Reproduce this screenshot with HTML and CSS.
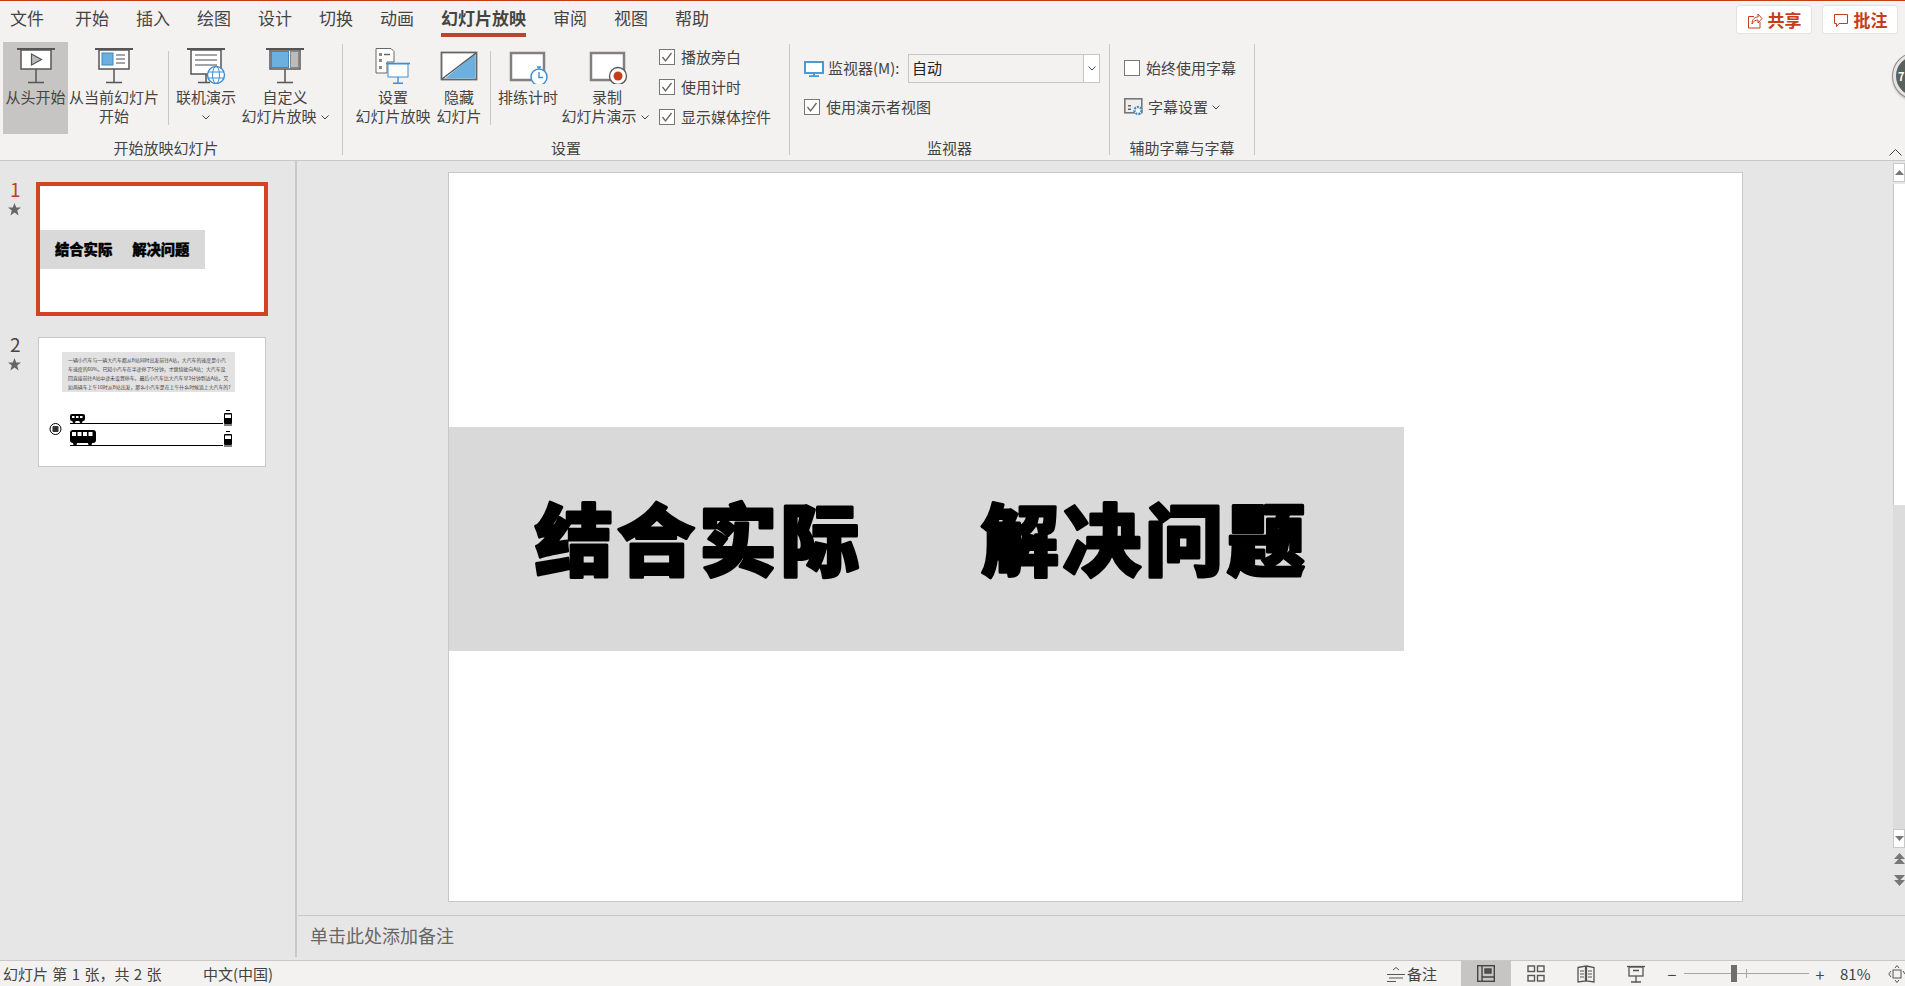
FILE: index.html
```html
<!DOCTYPE html>
<html lang="zh-CN">
<head>
<meta charset="utf-8">
<title>PowerPoint</title>
<link rel="stylesheet" href="styles.css">
</head>
<body>
<div class="app">
  <div class="topline"></div>
  <div class="tabs">
    <span class="tab first">文件</span><span class="tab">开始</span><span class="tab">插入</span><span class="tab">绘图</span><span class="tab">设计</span><span class="tab">切换</span><span class="tab">动画</span><span class="tab active">幻灯片放映</span><span class="tab">审阅</span><span class="tab">视图</span><span class="tab">帮助</span>
    <div class="top-actions">
      <button class="act"><svg width="16" height="18" viewBox="0 0 16 18" fill="none" stroke="#c43e1c" stroke-width="1"><path d="M7 5.5H1.5V17H13V11"/><path d="M5 13C5 8 8 6 11 6V3l4 4.5L11 12V9C8.5 9 6.5 10 5 13Z"/></svg>共享</button>
      <button class="act"><svg width="16" height="18" viewBox="0 0 16 18" fill="none" stroke="#c43e1c" stroke-width="1"><path d="M1.5 3.5H14.5V12.5H6L3.5 15.5V12.5H1.5Z"/></svg>批注</button>
    </div>
  </div>
  <div class="ribbon">
    <section class="group g1">
      <div class="gbody">
        <div class="cmd w-first selected">
          <svg class="ico" width="40" height="36" viewBox="0 0 40 36"><path d="M1 1H39" stroke="#555" stroke-width="2"/><rect x="5" y="2" width="30" height="19" fill="#fff" stroke="#555" stroke-width="1.5"/><path d="M20 21V34M12 34.5H28" stroke="#555" stroke-width="1.5" fill="none"/><path d="M15.5 6L25.5 11.500 15.5 17Z" fill="#bbb" stroke="#555" stroke-width="1.2"/></svg>
          <span class="ln">从头开始</span>
        </div>
        <div class="cmd w-cur">
          <svg class="ico" width="40" height="36" viewBox="0 0 40 36"><path d="M1 1H39" stroke="#555" stroke-width="2"/><rect x="5" y="2" width="30" height="19" fill="#fff" stroke="#555" stroke-width="1.5"/><path d="M20 21V34M12 34.5H28" stroke="#555" stroke-width="1.5" fill="none"/><rect x="8" y="5" width="11" height="12" fill="#6cb0e0" stroke="#3f87bd"/><path d="M22 7H31M22 11H31M22 15H31" stroke="#888" stroke-width="1.5"/></svg>
          <span class="ln">从当前幻灯片</span><span class="ln">开始</span>
        </div>
        <div class="vsep s1"></div>
        <div class="cmd w-online">
          <svg class="ico" width="40" height="36" viewBox="0 0 40 36"><path d="M1 1H39" stroke="#555" stroke-width="2"/><rect x="5" y="2" width="30" height="24" fill="#fff" stroke="#555" stroke-width="1.5"/><path d="M20 26V34M12 34.5H24" stroke="#555" stroke-width="1.5" fill="none"/><path d="M9 7H31M9 12H31M9 17H31" stroke="#888" stroke-width="1.5"/><circle cx="30" cy="27" r="8.5" fill="#fff" stroke="#3f8fd0" stroke-width="1.4"/><ellipse cx="30" cy="27" rx="3.5" ry="8.5" fill="none" stroke="#3f8fd0"/><path d="M22 24H38M22 30H38" stroke="#3f8fd0"/></svg>
          <span class="ln">联机演示</span><span class="ln"><svg class="chev" width="8" height="5" viewBox="0 0 8 5"><path d="M.5.5L4 4 7.5.5" fill="none" stroke="#444"/></svg></span>
        </div>
        <div class="cmd w-custom">
          <svg class="ico" width="40" height="36" viewBox="0 0 40 36"><path d="M1 1H39" stroke="#555" stroke-width="2"/><rect x="5" y="2" width="30" height="19" fill="#fff" stroke="#555" stroke-width="1.5"/><path d="M20 21V34M12 34.5H28" stroke="#555" stroke-width="1.5" fill="none"/><rect x="6.500" y="3.500" width="17" height="16" fill="#6cb0e0" stroke="#3f87bd"/><rect x="25.500" y="3.500" width="8" height="16" fill="#bbb" stroke="#888"/></svg>
          <span class="ln">自定义</span><span class="ln">幻灯片放映<svg class="chev after" width="8" height="5" viewBox="0 0 8 5"><path d="M.5.5L4 4 7.5.5" fill="none" stroke="#444"/></svg></span>
        </div>
      </div>
      <div class="glabel shift">开始放映幻灯片</div>
    </section>
    <section class="group g2">
      <div class="gbody">
        <div class="cmd w-setup">
          <svg class="ico" width="40" height="36" viewBox="0 0 40 36"><path d="M3 .5H18L21 3.5V14H14V25H3Z" fill="#fff" stroke="#666"/><path d="M6 5h3v3H6zM6 11h3v3H6zM6 18h3v3H6z" fill="#888"/><path d="M11 6.5H17" stroke="#666" stroke-width="1.5"/><path d="M13 15.5H37" stroke="#3f8fd0" stroke-width="1.6"/><rect x="15" y="16" width="20" height="13" fill="#fff" stroke="#3f8fd0"/><path d="M25 29V35M20 35.2H30" stroke="#3f8fd0" stroke-width="1.4"/></svg>
          <span class="ln">设置</span><span class="ln">幻灯片放映</span>
        </div>
        <div class="cmd w-hide">
          <svg class="ico" width="40" height="36" viewBox="0 0 40 36"><rect x="2.500" y="4.500" width="35" height="27" fill="#fff" stroke="#666" stroke-width="1.8"/><path d="M36.500 5.500V30.500H6Z" fill="#6cb0e0"/><path d="M3 31L37 5" stroke="#555" stroke-width="1.4"/></svg>
          <span class="ln">隐藏</span><span class="ln">幻灯片</span>
        </div>
        <div class="vsep s2"></div>
        <div class="cmd w-rehearse">
          <svg class="ico" width="40" height="36" viewBox="0 0 40 36"><rect x="3" y="5" width="33" height="27" fill="#fff" stroke="#808080" stroke-width="2.500"/><circle cx="31" cy="29" r="8" fill="#fff" stroke="#3f8fd0" stroke-width="1.500"/><path d="M31 24V29.500H35M29 19H33M31 19V21" stroke="#3f8fd0" stroke-width="1.400" fill="none"/></svg>
          <span class="ln">排练计时</span>
        </div>
        <div class="cmd w-record">
          <svg class="ico shifted" width="40" height="36" viewBox="0 0 40 36"><rect x="2" y="5" width="33" height="27" fill="#fff" stroke="#808080" stroke-width="2.500"/><circle cx="29" cy="28" r="8.500" fill="#fff" stroke="#555" stroke-width="1.300"/><circle cx="29" cy="28" r="4.500" fill="#c43e1c"/></svg>
          <span class="ln pad">录制</span><span class="ln">幻灯片演示<svg class="chev after" width="8" height="5" viewBox="0 0 8 5"><path d="M.5.5L4 4 7.5.5" fill="none" stroke="#444"/></svg></span>
        </div>
        <div class="checks">
          <label class="chk"><svg class="box" width="16" height="16" viewBox="0 0 16 16"><rect x=".5" y=".5" width="15" height="15" fill="#fff" stroke="#777"/><path d="M3.5 8L6.5 12 12.5 4" fill="none" stroke="#666" stroke-width="1.3"/></svg>播放旁白</label>
          <label class="chk"><svg class="box" width="16" height="16" viewBox="0 0 16 16"><rect x=".5" y=".5" width="15" height="15" fill="#fff" stroke="#777"/><path d="M3.5 8L6.5 12 12.5 4" fill="none" stroke="#666" stroke-width="1.3"/></svg>使用计时</label>
          <label class="chk"><svg class="box" width="16" height="16" viewBox="0 0 16 16"><rect x=".5" y=".5" width="15" height="15" fill="#fff" stroke="#777"/><path d="M3.5 8L6.5 12 12.5 4" fill="none" stroke="#666" stroke-width="1.3"/></svg>显示媒体控件</label>
        </div>
      </div>
      <div class="glabel">设置</div>
    </section>
    <section class="group g3">
      <div class="gbody col">
        <div class="mon-row">
          <svg width="20" height="16" viewBox="0 0 20 16"><rect x="1" y="1" width="18" height="11" fill="#fff" stroke="#4a9ad4" stroke-width="2"/><path d="M10 12V15M5 15.2H15" stroke="#4a9ad4" stroke-width="2"/></svg>
          <span class="mon-label">监视器(M):</span>
          <div class="combo"><span class="combo-val">自动</span><span class="combo-btn"><svg width="8" height="5" viewBox="0 0 8 5"><path d="M.5.5L4 4 7.5.5" fill="none" stroke="#444"/></svg></span></div>
        </div>
        <label class="chk presenter"><svg class="box" width="16" height="16" viewBox="0 0 16 16"><rect x=".5" y=".5" width="15" height="15" fill="#fff" stroke="#777"/><path d="M3.5 8L6.5 12 12.5 4" fill="none" stroke="#666" stroke-width="1.3"/></svg>使用演示者视图</label>
      </div>
      <div class="glabel">监视器</div>
    </section>
    <section class="group g4">
      <div class="gbody col">
        <label class="chk always"><svg class="box" width="16" height="16" viewBox="0 0 16 16"><rect x=".5" y=".5" width="15" height="15" fill="#fff" stroke="#777"/></svg>始终使用字幕</label>
        <div class="subset"><svg width="20" height="18" viewBox="0 0 20 18"><rect x=".8" y=".8" width="17" height="14" fill="#eee" stroke="#777" stroke-width="1.6"/><path d="M4 7h3v1.5H4zM4 10.5h3V12H4z" fill="#666"/><circle cx="14" cy="12.5" r="3.5" fill="#fff" stroke="#3f8fd0" stroke-width="2.4" stroke-dasharray="2 1"/></svg><span>字幕设置</span><svg class="chev" width="8" height="5" viewBox="0 0 8 5"><path d="M.5.5L4 4 7.5.5" fill="none" stroke="#444"/></svg></div>
      </div>
      <div class="glabel">辅助字幕与字幕</div>
    </section>
    <svg class="collapse" width="13" height="8" viewBox="0 0 13 8"><path d="M.5 7.5L6.5 1.5 12.5 7.5" fill="none" stroke="#444"/></svg>
  </div>
  <div class="badge"><span>7</span></div>
  <main class="main">
    <aside class="pane">
      <div class="thumb-row">
        <div class="num cur">1<svg class="star" width="13" height="13" viewBox="0 0 12 12"><path d="M6 0L7.6 4.2H12L8.5 7 9.8 11.5 6 8.8 2.2 11.5 3.5 7 0 4.2H4.4Z" fill="#666"/></svg></div>
        <div class="thumb one">
          <div class="tband"><span>结合实际</span><span>解决问题</span></div>
        </div>
      </div>
      <div class="thumb-row second">
        <div class="num">2<svg class="star" width="13" height="13" viewBox="0 0 12 12"><path d="M6 0L7.6 4.2H12L8.5 7 9.8 11.5 6 8.8 2.2 11.5 3.5 7 0 4.2H4.4Z" fill="#666"/></svg></div>
        <div class="thumb two">
          <div class="problem">
            <p>一辆小汽车与一辆大汽车都从B站同时出发前往A站，大汽车的速度是小汽</p>
            <p>车速度的60%。已知小汽车在半途停了5分钟，才继续驶向A站；大汽车没</p>
            <p>回直接前往A站中途未设置停车。最后小汽车比大汽车早3分钟到达A站。又</p>
            <p>如两辆车上午10时从B站出发，那么小汽车是在上午什么时候追上大汽车的?</p>
          </div>
          <svg class="route" width="226" height="44" viewBox="0 0 226 44">
            <circle cx="16.500" cy="22" r="5.500" fill="#fff" stroke="#000"/><rect x="13.500" y="19" width="6" height="6" rx="1" fill="#333"/>
            <rect x="31" y="7" width="15" height="7" rx="2" fill="#000"/><path d="M33 9h2.500v2H33zM37 9h2.500v2H37zM41 9h2.500v2H41z" fill="#fff"/><circle cx="35" cy="14.500" r="1.500" fill="#000"/><circle cx="42" cy="14.500" r="1.500" fill="#000"/>
            <path d="M31 16.500H184M31 38.500H184" stroke="#000"/>
            <rect x="185" y="6" width="8" height="11" rx="1" fill="#000"/><rect x="186" y="7.500" width="6" height="3.500" fill="#fff"/><path d="M187 3.500H191M185 18H193" stroke="#000"/>
            <rect x="31" y="23" width="26" height="13" rx="3" fill="#000"/><path d="M33 25h4v4h-4zM38.500 25h4v4h-4zM44 25h4v4h-4zM49.500 25h4v4h-4z" fill="#fff"/><circle cx="36" cy="36.500" r="2" fill="#000"/><circle cx="51" cy="36.500" r="2" fill="#000"/>
            <rect x="185" y="27" width="8" height="11" rx="1" fill="#000"/><rect x="186" y="28.500" width="6" height="3.500" fill="#fff"/><path d="M187 24.500H191M185 39H193" stroke="#000"/>
          </svg>
        </div>
      </div>
    </aside>
    <div class="work">
      <div class="canvas">
        <div class="stage">
          <div class="slide">
            <div class="band">
              <svg class="title" width="955" height="224" viewBox="0 0 955 224"><text x="86" y="143">结合实际</text><text x="532" y="143">解决问题</text></svg>
            </div>
          </div>
        </div>
        <div class="vscroll">
          <div class="sbtn"><svg width="9" height="5" viewBox="0 0 9 5"><path d="M4.500 0L9 5H0Z" fill="#777"/></svg></div>
          <div class="sthumb"></div>
          <div class="strack"></div>
          <div class="sbtn low"><svg width="9" height="5" viewBox="0 0 9 5"><path d="M4.500 5L9 0H0Z" fill="#777"/></svg></div>
          <svg class="spage" width="11" height="12" viewBox="0 0 11 12"><path d="M5.500 0L11 6H0ZM5.500 5L11 11H0Z" fill="#777"/></svg>
          <svg class="spage" width="11" height="12" viewBox="0 0 11 12"><path d="M5.500 12L11 6H0ZM5.500 7L11 1H0Z" fill="#777"/></svg>
        </div>
      </div>
      <div class="notes">单击此处添加备注</div>
    </div>
  </main>
  <footer class="status">
    <span class="s-count">幻灯片 第 1 张，共 2 张</span>
    <span class="s-lang">中文(中国)</span>
    <div class="s-right">
      <div class="s-notes"><svg width="18" height="18" viewBox="0 0 18 18" fill="none" stroke="#555"><path d="M6 5L9 2.500 12 5M0 9.500H18M2 13H16M0 16.500H9"/></svg>备注</div>
      <div class="view on"><svg width="18" height="17" viewBox="0 0 18 17" fill="none" stroke="#444" stroke-width="1.4"><rect x=".7" y=".7" width="16.600" height="15.600"/><path d="M5 1V16M5 12H17"/><rect x="8" y="4" width="6" height="4" fill="#555"/></svg></div>
      <div class="view"><svg width="18" height="17" viewBox="0 0 18 17" fill="none" stroke="#555" stroke-width="1.400"><rect x="1" y="1" width="6.500" height="5.500"/><rect x="10.500" y="1" width="6.500" height="5.500"/><rect x="1" y="10.500" width="6.500" height="5.500"/><rect x="10.500" y="10.500" width="6.500" height="5.500"/></svg></div>
      <div class="view"><svg width="18" height="18" viewBox="0 0 18 18" fill="none" stroke="#555" stroke-width="1.300"><path d="M1 2.500L8.500 1V16L1 17ZM9.500 1L17 2.500V17L9.500 16Z"/><path d="M3 6H7M3 9H7M3 12H7M11 6H15M11 9H15M11 12H15" stroke-width="1"/></svg></div>
      <div class="view"><svg width="18" height="18" viewBox="0 0 18 18" fill="none" stroke="#555" stroke-width="1.300"><path d="M0 1.500H18"/><rect x="2" y="2" width="14" height="9"/><path d="M9 11V16.500M4 17H14M6 5.500H12"/></svg></div>
      <span class="zbtn minus">−</span>
      <div class="slider"><span class="tick"></span><span class="knob"></span></div>
      <span class="zbtn plus">+</span>
      <span class="pct">81%</span>
      <svg class="fit" width="17" height="20" viewBox="0 0 17 20" fill="none" stroke="#555"><rect x="5" y="6" width="8" height="8"/><path d="M3 7L.8 10 3 13M7 4L9 1.500 11 4M7 16L9 18.500 11 16M15 7L17 10"/></svg>
    </div>
  </footer>
</div>
</body>
</html>
```
FILE: styles.css
```css
* { box-sizing: border-box; }
html, body { margin: 0; padding: 0; }
body {
  width: 1905px;
  height: 986px;
  overflow: hidden;
  font-family: "Noto Sans CJK SC", "Noto Sans", sans-serif;
  color: #444;
  background: #e6e6e6;
}
.app { position: relative; width: 1905px; height: 986px; display: flex; flex-direction: column; overflow: hidden; }
.topline { height: 1px; background: #c43e1c; flex: none; }

.tabs { height: 36px; flex: none; display: flex; align-items: flex-start; background: #f3f2f1; padding-left: 10px; gap: 27px; }
.tab { height: 36px; line-height: 34px; font-size: 17px; white-space: nowrap; color: #444; }
.tab.first { margin-right: 4px; }
.tab.active { font-weight: 700; box-shadow: inset 0 -4px 0 #b7472a; }
.top-actions { margin-left: auto; display: flex; gap: 10px; padding: 4px 7px 0 0; }
.act {
  width: 76px; height: 29px; padding: 0; display: flex; align-items: center; justify-content: center; gap: 5px;
  background: #fff; border: 1px solid #e4e2e0; border-radius: 3px;
  font: 700 17px "Noto Sans CJK SC", sans-serif; color: #c43e1c;
}

.ribbon { position: relative; height: 124px; flex: none; display: flex; padding-top: 7px; background: #f3f2f1; border-bottom: 1px solid #c8c8c8; }
.group { height: 111px; flex: none; border-right: 1px solid #c8c8c8; display: flex; flex-direction: column; }
.g1 { width: 343px; }
.g2 { width: 447px; }
.g3 { width: 320px; }
.g4 { width: 145px; }
.gbody { height: 96px; flex: none; display: flex; align-items: flex-start; }
.gbody.col { flex-direction: column; padding-left: 14px; }
.glabel { height: 16px; line-height: 16px; font-size: 15px; text-align: center; white-space: nowrap; }
.glabel.shift { padding-right: 10px; }

.cmd { flex: none; height: 92px; margin-top: -2px; padding-top: 6px; display: flex; flex-direction: column; align-items: center; font-size: 15px; }
.cmd.selected { background: #c6c5c3; }
.ico { display: block; flex: none; margin-bottom: 3px; }
.ico.shifted { margin-left: 7px; }
.ln { display: block; height: 19px; line-height: 19px; white-space: nowrap; }
.ln.pad { padding-left: 4px; }
.chev { display: inline-block; vertical-align: 2px; }
.chev.after { margin-left: 4px; }
.w-first { width: 65px; margin-left: 3px; }
.w-cur { width: 92px; }
.w-online { width: 70px; margin-left: 2px; }
.w-custom { width: 88px; }
.w-setup { width: 76px; margin-left: 12px; }
.w-hide { width: 44px; margin-left: 6px; }
.w-rehearse { width: 60px; margin-left: 7px; }
.w-record { width: 84px; margin-left: 5px; }
.vsep { flex: none; width: 1px; height: 74px; margin-top: 7px; background: #c8c8c8; }
.s1 { margin-left: 8px; }
.s2 { margin-left: 9px; }

.checks { margin: -3px 0 0 12px; display: flex; flex-direction: column; }
.chk { display: flex; align-items: center; gap: 6px; height: 30px; font-size: 15px; white-space: nowrap; }
.box { flex: none; margin-top: 2px; }
.mon-row { display: flex; align-items: center; margin-top: 10px; height: 29px; font-size: 15px; }
.mon-label { margin-left: 4px; width: 80px; white-space: nowrap; padding-bottom: 3px; }
.combo { width: 192px; height: 29px; display: flex; border: 1px solid #c6c6c6; background: #f3f2f1; }
.combo-val { flex: 1; padding-left: 3px; line-height: 25px; color: #222; font-size: 15px; }
.combo-btn { width: 16px; background: #fff; border-left: 1px solid #c6c6c6; display: flex; align-items: center; justify-content: center; }
.chk.presenter { margin-top: 8px; height: 30px; }
.chk.always { margin-top: 8px; height: 30px; }
.subset { margin-top: 13px; display: flex; align-items: center; gap: 4px; height: 24px; font-size: 15px; white-space: nowrap; }
.subset span { padding-bottom: 1px; }
.subset .chev { vertical-align: baseline; }
.collapse { position: absolute; right: 3px; bottom: 4px; }

.badge {
  position: absolute; left: 1893px; top: 53px; width: 46px; height: 46px; border-radius: 50%;
  background: #59615f; border: 3px solid #e4e4e4; box-shadow: 0 0 0 1px #888, 0 2px 3px rgba(0,0,0,.35);
  color: #fff; font-size: 11px; font-weight: 700; line-height: 40px; padding-left: 2px;
}

.main { flex: none; height: 799px; display: flex; }
.pane { width: 297px; height: 796px; flex: none; border-right: 2px solid #c8c8c8; padding-top: 21px; }
.thumb-row { display: flex; align-items: flex-start; }
.thumb-row.second { margin-top: 21px; }
.num { width: 36px; margin-top: -3px; padding-left: 10px; font-size: 19px; line-height: 20px; color: #444; flex: none; }
.num.cur { color: #c43e1c; }
.star { display: block; margin: 4px 0 0 -2px; }
.thumb { background: #fff; flex: none; }
.thumb.one { width: 232px; height: 134px; border: 4px solid #d04423; padding-top: 44px; }
.tband { width: 165px; height: 39px; background: #d9d9d9; padding-left: 15px; display: flex; align-items: center; gap: 20px; color: #000; font-size: 14.300px; font-weight: 900; line-height: 1; -webkit-text-stroke: .4px #000; }
.thumb.two { width: 228px; height: 130px; margin-left: 2px; border: 1px solid #c8c8c8; padding-top: 14px; }
.problem { width: 173px; height: 40px; margin-left: 23px; background: #e2e2e2; padding: 3px 0 0 6px; overflow: hidden; }
.problem p { margin: 0; font-size: 4.900px; line-height: 9px; height: 9px; color: #444; white-space: nowrap; }
.route { display: block; margin-top: 15px; }

.work { flex: 1; min-width: 0; display: flex; flex-direction: column; }
.canvas { height: 754px; flex: none; display: flex; }
.stage { flex: 1; min-width: 0; padding: 11px 0 0 151px; }
.slide { width: 1295px; height: 730px; background: #fff; border: 1px solid #c8c8c8; padding-top: 254px; }
.band { width: 955px; height: 224px; background: #d9d9d9; }
.title { display: block; font-size: 78px; font-weight: 900; letter-spacing: 4px; fill: #000; stroke: #000; stroke-width: 3px; stroke-linejoin: round; }
.vscroll { width: 12px; flex: none; padding-top: 2px; display: flex; flex-direction: column; align-items: center; }
.sbtn { width: 12px; height: 19px; flex: none; background: #fff; border: 1px solid #c8c8c8; display: flex; align-items: center; justify-content: center; }
.sthumb { width: 12px; height: 321px; flex: none; margin-top: 2px; background: #fff; border-left: 1px solid #c8c8c8; }
.strack { width: 12px; height: 324px; flex: none; background: #dcdcdc; }
.spage { display: block; flex: none; margin-top: 5px; margin-bottom: 4px; }

.notes { flex: 1; margin-left: 1px; border-top: 1px solid #c8c8c8; padding-left: 12px; font-size: 18px; line-height: 38px; color: #666; }

.status { flex: none; height: 26px; display: flex; align-items: center; background: #f3f2f1; border-top: 1px solid #c8c8c8; font-size: 15px; color: #444; }
.s-count { margin-left: 3px; width: 200px; white-space: nowrap; word-spacing: 1px; }
.s-lang { white-space: nowrap; }
.s-right { margin-left: auto; height: 25px; display: flex; align-items: center; }
.s-notes { display: flex; align-items: center; gap: 2px; font-size: 15px; margin-right: 24px; }
.view { width: 50px; height: 25px; display: flex; align-items: center; justify-content: center; }
.view.on { background: #c6c5c3; }
.zbtn { width: 10px; font-size: 16px; line-height: 1; text-align: center; }
.minus { margin-left: 6px; }
.slider { position: relative; width: 125px; height: 1px; margin: 0 6px 0 7px; background: #a6a6a6; }
.knob { position: absolute; left: 47px; top: -8px; width: 6px; height: 17px; background: #6e6e6e; }
.tick { position: absolute; left: 62px; top: -4px; width: 1px; height: 9px; background: #a6a6a6; }
.pct { width: 30px; margin-left: 15px; font-size: 15px; white-space: nowrap; }
.fit { margin-left: 18px; flex: none; }
```
